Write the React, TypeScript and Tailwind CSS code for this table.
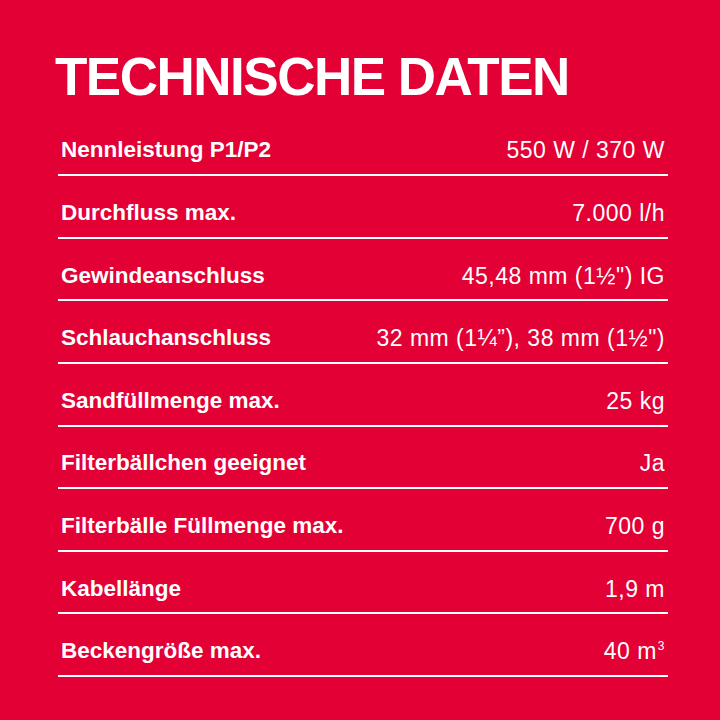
const rows: { label: string; value: React.ReactNode }[] = [
  { label: "Nennleistung P1/P2", value: "550 W / 370 W" },
  { label: "Durchfluss max.", value: "7.000 l/h" },
  { label: "Gewindeanschluss", value: "45,48 mm (1½\") IG" },
  { label: "Schlauchanschluss", value: "32 mm (1¼”), 38 mm (1½\")" },
  { label: "Sandfüllmenge max.", value: "25 kg" },
  { label: "Filterbällchen geeignet", value: "Ja" },
  { label: "Filterbälle Füllmenge max.", value: "700 g" },
  { label: "Kabellänge", value: "1,9 m" },
  {
    label: "Beckengröße max.",
    value: (
      <>
        40 m<sup className="-top-[9px] ml-[1px] text-[12px]">3</sup>
      </>
    ),
  },
];

export default function App() {
  return (
    <div className="h-[720px] w-[720px] overflow-hidden bg-[#e20035] font-['Liberation_Sans',Arial,sans-serif] text-white">
      <h1 className="ml-[55px] pt-[50px] text-[53px] font-bold leading-none tracking-[-1.5px]">
        TECHNISCHE DATEN
      </h1>
      <div className="ml-[58px] mt-[10.4px] w-[610px]">
        {rows.map((row) => (
          <div
            key={row.label}
            className="flex h-[62.625px] items-start justify-between border-b-2 border-white px-[3px] pt-[23.9px] leading-[26px]"
          >
            <span className="text-[22.5px] font-bold">{row.label}</span>
            <span className="text-[23px] tracking-[0.5px]">{row.value}</span>
          </div>
        ))}
      </div>
    </div>
  );
}
